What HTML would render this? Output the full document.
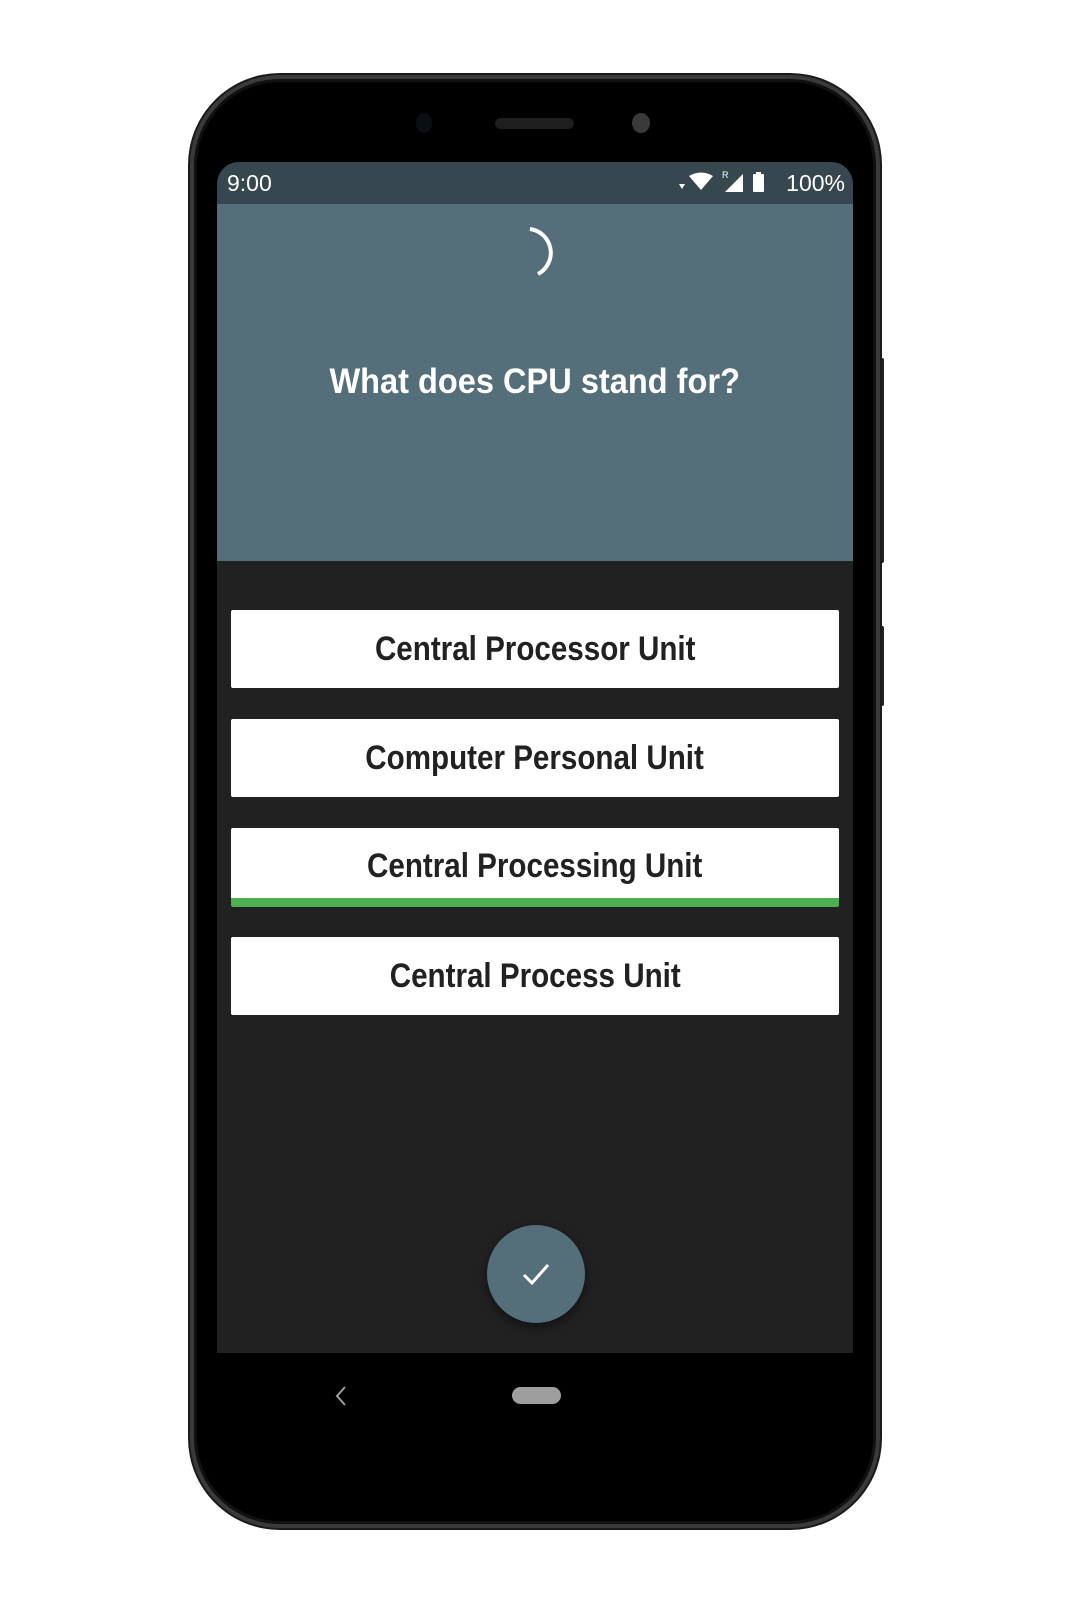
<!DOCTYPE html>
<html><head><meta charset="utf-8"><style>
*{margin:0;padding:0;box-sizing:border-box}
body{width:1075px;height:1600px;background:#fff;position:relative;overflow:hidden;font-family:"Liberation Sans",sans-serif}
.abs{position:absolute}
.phone{left:190px;top:75px;width:690px;height:1453px;border-radius:90px;background:#000;border:4px solid #3a3a3a;box-shadow:0 0 0 2px #1a1a1a, inset 0 0 0 3px #111}
.screen{left:217px;top:162px;width:636px;height:1191px;background:#212121;border-radius:22px 22px 0 0;overflow:hidden}
.status{left:0;top:0;width:636px;height:42px;background:#37474f;color:#fff;font-size:23px}
.header{left:0;top:42px;width:636px;height:357px;background:#546e7a}
.q{left:0;top:158px;width:636px;text-align:center;color:#fff;font-weight:bold;font-size:35px}
.q span{display:inline-block;transform:scaleX(0.93)}
.btn{left:14px;width:608px;height:78px;background:#fff;border-radius:2px;text-align:center;font-weight:bold;font-size:34px;color:#212121;line-height:78px}
.btn span{display:inline-block;transform:scaleX(0.87)}
.fab{left:270px;top:1063px;width:98px;height:98px;border-radius:50%;background:#546e7a;box-shadow:0 4px 10px rgba(0,0,0,.5)}
</style></head><body>
<div class="abs" style="left:878px;top:358px;width:6px;height:205px;background:#222;border-radius:2px"></div>
<div class="abs" style="left:878px;top:626px;width:6px;height:80px;background:#222;border-radius:2px"></div>
<div class="abs phone"></div>
<div class="abs" style="left:495px;top:118px;width:79px;height:11px;border-radius:6px;background:#1e1e1e"></div>
<div class="abs" style="left:416px;top:113px;width:16px;height:20px;border-radius:50%;background:#0b0f14"></div>
<div class="abs" style="left:632px;top:113px;width:18px;height:20px;border-radius:50%;background:#3a3a3a"></div>
<div class="abs screen">
  <div class="abs status">
    <div class="abs" style="left:10px;top:8px">9:00</div>
    <svg class="abs" style="left:460px;top:8px" width="90" height="26" viewBox="0 0 90 26">
      <polygon points="2,14 8,14 5,19" fill="#fff"/>
      <path d="M12,6 Q24,-1 36,6 L24,20 Z" fill="#fff"/>
      <text x="45" y="8" fill="#fff" font-size="9" font-family="Liberation Sans">R</text>
      <polygon points="66,4 66,22 48,22" fill="#fff"/>
      <rect x="76" y="4" width="11" height="18" rx="1" fill="#fff"/>
      <rect x="79" y="2" width="5" height="3" fill="#fff"/>
    </svg>
    <div class="abs" style="right:8px;top:8px">100%</div>
  </div>
  <div class="abs header">
    <svg class="abs" style="left:293px;top:18px" width="60" height="60" viewBox="0 0 60 60">
      <path d="M20,7 A24,24 0 0 1 28,52" fill="none" stroke="#fff" stroke-width="4"/>
    </svg>
    <div class="abs q"><span>What does CPU stand for?</span></div>
  </div>
  <div class="abs btn" style="top:448px"><span>Central Processor Unit</span></div>
  <div class="abs btn" style="top:557px"><span>Computer Personal Unit</span></div>
  <div class="abs btn" style="top:666px;height:79px;border-bottom:9px solid #4caf50;line-height:76px"><span>Central Processing Unit</span></div>
  <div class="abs btn" style="top:775px"><span>Central Process Unit</span></div>
  <div class="abs fab">
    <svg class="abs" style="left:31px;top:31px" width="36" height="36" viewBox="0 0 36 36"><path d="M6,19 L14,27 L30,9" fill="none" stroke="#fff" stroke-width="3"/></svg>
  </div>
</div>
<svg class="abs" style="left:333px;top:1385px" width="16" height="22" viewBox="0 0 16 22"><path d="M12,2 L4,11 L12,20" fill="none" stroke="#9e9e9e" stroke-width="2"/></svg>
<div class="abs" style="left:512px;top:1387px;width:49px;height:17px;border-radius:9px;background:#9e9e9e"></div>
</body></html>
